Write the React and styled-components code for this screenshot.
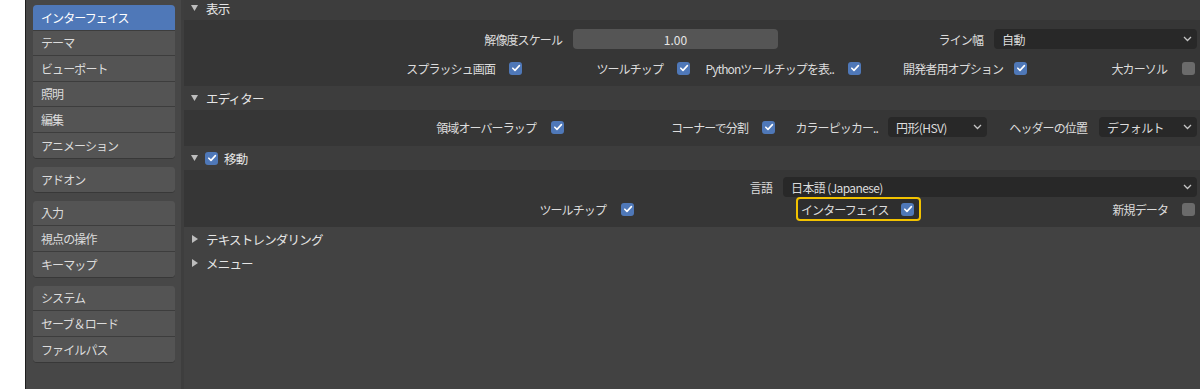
import styled, {createGlobalStyle} from 'styled-components';

const GlobalStyle = createGlobalStyle`
    html, body {
        margin: 0;
        padding: 0;
        background: #ffffff;
    }
    body {
        font-family: "Noto Sans CJK JP", "Noto Sans", sans-serif;
        font-size: 12px;
        color: #e2e2e2;
    }
`

const NAV_GROUPS = [
    ['インターフェイス', 'テーマ', 'ビューポート', '照明', '編集', 'アニメーション'],
    ['アドオン'],
    ['入力', '視点の操作', 'キーマップ'],
    ['システム', 'セーブ＆ロード', 'ファイルパス'],
];

function App () {
    return (
        <>
            <GlobalStyle />
            <Page>
                <Gutter />
                <Sidebar>
                    {NAV_GROUPS.map((group, gi) => (
                        <NavGroup key={gi}>
                            {group.map(name => (
                                <NavItem key={name} active={name === 'インターフェイス'}>{name}</NavItem>
                            ))}
                        </NavGroup>
                    ))}
                </Sidebar>
                <Main>
                    <Scroll>
                        <PanelHeader>
                            <Caret open />
                            <HeaderText>表示</HeaderText>
                        </PanelHeader>
                        <PanelBody pt="9" pb="8" gap="9">
                            <Row>
                                <Cell pr="7">
                                    <Label>解像度スケール</Label>
                                    <Slider>1.00</Slider>
                                </Cell>
                                <Cell w="415" pr="3">
                                    <Label>ライン幅</Label>
                                    <Select w="203">自動</Select>
                                </Cell>
                            </Row>
                            <Row>
                                <Cell pr="5" gap="14">
                                    <Label>スプラッシュ画面</Label>
                                    <Check on />
                                </Cell>
                                <Cell w="168" pr="5" gap="14">
                                    <Label>ツールチップ</Label>
                                    <Check on />
                                </Cell>
                                <Cell w="171" pr="5" gap="14">
                                    <Label>Pythonツールチップを表..</Label>
                                    <Check on />
                                </Cell>
                                <Cell w="166" pr="5" gap="11">
                                    <Label>開発者用オプション</Label>
                                    <Check on />
                                </Cell>
                                <Cell w="168" pr="5" gap="15">
                                    <Label>大カーソル</Label>
                                    <Check />
                                </Cell>
                            </Row>
                        </PanelBody>

                        <PanelHeader>
                            <Caret open />
                            <HeaderText>エディター</HeaderText>
                        </PanelHeader>
                        <PanelBody pt="7" pb="9">
                            <Row>
                                <Cell pr="5" gap="15">
                                    <Label>領域オーバーラップ</Label>
                                    <Check on />
                                </Cell>
                                <Cell w="211" pr="5" gap="14">
                                    <Label>コーナーで分割</Label>
                                    <Check on />
                                </Cell>
                                <Cell w="215" pr="8" gap="10">
                                    <Label>カラーピッカー..</Label>
                                    <Select w="99">円形(HSV)</Select>
                                </Cell>
                                <Cell w="205" pr="3" gap="12">
                                    <Label>ヘッダーの位置</Label>
                                    <Select w="98">デフォルト</Select>
                                </Cell>
                            </Row>
                        </PanelBody>

                        <PanelHeader>
                            <Caret open />
                            <HeaderCheck><Check on /></HeaderCheck>
                            <HeaderText>移動</HeaderText>
                        </PanelHeader>
                        <PanelBody pt="7" pb="6">
                            <Row>
                                <Cell pr="3" gap="11">
                                    <Label>言語</Label>
                                    <Select w="414">日本語 (Japanese)</Select>
                                </Cell>
                            </Row>
                            <Row h="24">
                                <Cell pr="5" gap="15">
                                    <Label>ツールチップ</Label>
                                    <Check on />
                                </Cell>
                                <Cell w="285" pr="3">
                                    <Highlight>
                                        <Label>インターフェイス</Label>
                                        <Check on />
                                    </Highlight>
                                </Cell>
                                <Cell w="276" pr="5" gap="14">
                                    <Label>新規データ</Label>
                                    <Check />
                                </Cell>
                            </Row>
                        </PanelBody>

                        <PanelHeader closed>
                            <Caret />
                            <HeaderText>テキストレンダリング</HeaderText>
                        </PanelHeader>
                        <PanelHeader closed>
                            <Caret />
                            <HeaderText>メニュー</HeaderText>
                        </PanelHeader>
                    </Scroll>
                </Main>
            </Page>
        </>
    );
}

export default App;


/******************************
 * SMALL WIDGETS
 */

function Caret ({open}) {
    return (
        <CaretBox>
            {open
                ? <svg width="7" height="6" viewBox="0 0 7 6"><polygon points="0,0 7,0 3.5,6" fill="#bdbdbd" /></svg>
                : <svg width="6" height="8" viewBox="0 0 6 8"><polygon points="0,0 6,4 0,8" fill="#bdbdbd" /></svg>}
        </CaretBox>
    );
}

function Check ({on}) {
    return (
        <CheckBox on={on ? 1 : 0}>
            {on && (
                <svg width="10" height="10" viewBox="0 0 10 10">
                    <polyline points="1.8,5.2 4,7.4 8.4,2.6" fill="none" stroke="#ffffff" strokeWidth="1.6" strokeLinecap="round" strokeLinejoin="round" />
                </svg>
            )}
        </CheckBox>
    );
}

function Select ({w, children}) {
    return (
        <SelectBox w={w}>
            <span>{children}</span>
            <svg width="9" height="6" viewBox="0 0 9 6">
                <polyline points="1,1 4.5,4.5 8,1" fill="none" stroke="#c4c4c4" strokeWidth="1.3" />
            </svg>
        </SelectBox>
    );
}


/******************************
 * LAYOUT
 */

const Page = styled.div`
    display: flex;
    width: 1200px;
    height: 389px;
    overflow: hidden;
`

const Gutter = styled.div`
    width: 25px;
    background: #ffffff;
    border-right: 1px solid #1e1e1e;
`

const Sidebar = styled.div`
    box-sizing: border-box;
    width: 158px;
    padding: 5px 0 0 7px;
    background: #474747;
    border-right: 3px solid #3e3e3e;
    display: flex;
    flex-direction: column;
    gap: 8.5px;
`

const NavGroup = styled.div`
    width: 142px;
    border-radius: 4px;
    overflow: hidden;
    background: #545454;
    box-shadow: 0 1px 0 #383838;
`

const NavItem = styled.div`
    box-sizing: border-box;
    height: 25.5px;
    padding-left: 8px;
    display: flex;
    align-items: center;
    letter-spacing: -0.9px;
    color: ${p => p.active ? '#ffffff' : '#dcdcdc'};
    background: ${p => p.active ? '#4f78b8' : '#545454'};
    border-bottom: 1px solid #3d3d3d;

    &:last-child {
        border-bottom: none;
    }
`

const Main = styled.div`
    flex: 1;
    background: #424242;
    overflow: hidden;
`

const Scroll = styled.div`
    margin-top: -4px;
`

const PanelHeader = styled.div`
    height: 24px;
    display: flex;
    align-items: center;
    padding-left: 7px;
    background: ${p => p.closed ? '#424242' : '#3d3d3d'};
`

const CaretBox = styled.div`
    width: 7px;
    display: flex;
    align-items: center;
    justify-content: center;
    margin-right: 8px;
`

const HeaderCheck = styled.div`
    margin-left: -1px;
    margin-right: 6px;
    display: flex;
`

const HeaderText = styled.div`
    font-size: 12.5px;
    letter-spacing: -0.8px;
    color: #e6e6e6;
`

const PanelBody = styled.div`
    display: flex;
    flex-direction: column;
    gap: ${p => p.gap || 0}px;
    padding-top: ${p => p.pt}px;
    padding-bottom: ${p => p.pb}px;
    background: #363636;
`

const Row = styled.div`
    display: flex;
    height: ${p => p.h || 20}px;
`

const Cell = styled.div`
    box-sizing: border-box;
    ${p => p.w ? `width: ${p.w}px; flex: none;` : 'flex: 1;'}
    display: flex;
    align-items: center;
    justify-content: flex-end;
    gap: ${p => p.gap || 11}px;
    padding-right: ${p => p.pr || 0}px;
    min-width: 0;
`

const Label = styled.span`
    white-space: nowrap;
    letter-spacing: -0.9px;
    color: #dcdcdc;
`

const CheckBox = styled.div`
    flex: none;
    width: 13px;
    height: 13px;
    border-radius: 3px;
    display: flex;
    align-items: center;
    justify-content: center;
    background: ${p => p.on ? '#4f78b8' : '#6b6b6b'};
`

const Slider = styled.div`
    flex: none;
    width: 205px;
    height: 20px;
    border-radius: 4px;
    background: #555555;
    display: flex;
    align-items: center;
    justify-content: center;
    color: #e6e6e6;
`

const SelectBox = styled.div`
    box-sizing: border-box;
    flex: none;
    width: ${p => p.w}px;
    height: 20px;
    border-radius: 4px;
    background: #282828;
    display: flex;
    align-items: center;
    justify-content: space-between;
    padding: 0 5px 0 8px;
    color: #dcdcdc;
    letter-spacing: -0.6px;
`

const Highlight = styled.div`
    box-sizing: border-box;
    width: 125px;
    height: 24px;
    border: 2px solid #f2c200;
    border-radius: 4px;
    background: #2e2e2e;
    display: flex;
    align-items: center;
    justify-content: space-between;
    padding: 0 5px 0 3px;
`
